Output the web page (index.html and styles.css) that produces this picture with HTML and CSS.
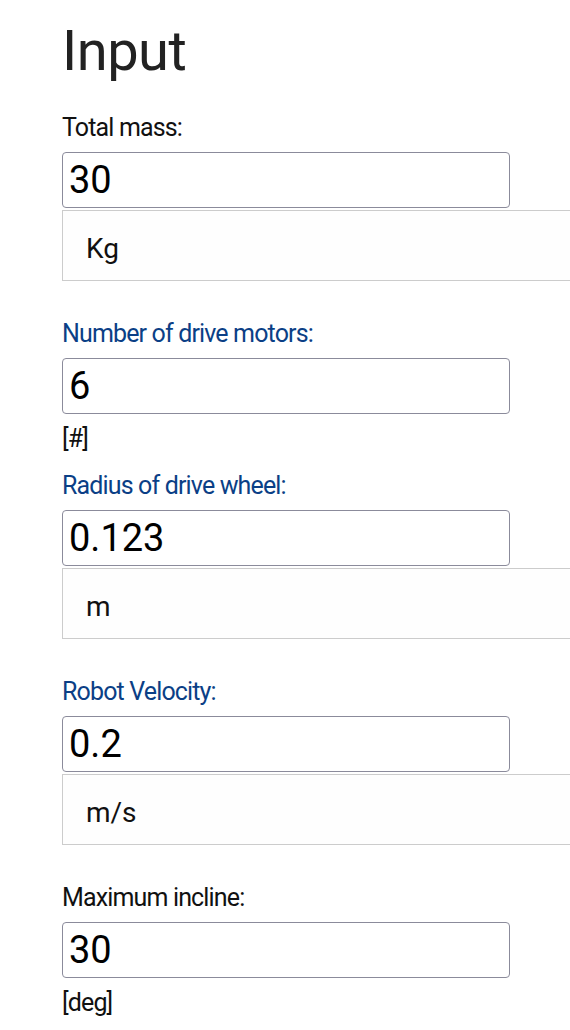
FILE: index.html
```html
<!DOCTYPE html>
<html lang="en">
<head>
<meta charset="utf-8">
<title>Input</title>
<link rel="stylesheet" href="styles.css">
</head>
<body>
<main class="page">
  <h1 class="title">Input</h1>

  <div class="field field-boxed">
    <label class="label">Total mass:</label>
    <input class="value" type="text" value="30">
    <div class="unit-box">Kg</div>
  </div>

  <div class="field field-plain">
    <label class="label label-blue">Number of drive motors:</label>
    <input class="value" type="text" value="6">
    <div class="unit-plain">[#]</div>
  </div>

  <div class="field field-boxed">
    <label class="label label-blue">Radius of drive wheel:</label>
    <input class="value" type="text" value="0.123">
    <div class="unit-box">m</div>
  </div>

  <div class="field field-boxed">
    <label class="label label-blue">Robot Velocity:</label>
    <input class="value" type="text" value="0.2">
    <div class="unit-box">m/s</div>
  </div>

  <div class="field field-plain">
    <label class="label">Maximum incline:</label>
    <input class="value" type="text" value="30">
    <div class="unit-plain">[deg]</div>
  </div>
</main>
</body>
</html>
```

FILE: styles.css
```css
html {
  overflow: hidden;
}

body {
  margin: 0;
  background: #ffffff;
  font-family: Roboto, "Liberation Sans", sans-serif;
  color: #111111;
}

.page {
  padding: 23px 0 0 62px;
}

.title {
  margin: 0 0 34px 0;
  font-size: 56px;
  line-height: 56px;
  font-weight: 400;
  color: #222222;
  letter-spacing: -0.5px;
}

.field {
  display: flex;
  flex-direction: column;
  align-items: stretch;
}

.field-boxed {
  margin-bottom: 38px;
}

.field-plain {
  margin-bottom: 17px;
}

.label {
  display: block;
  font-size: 25px;
  line-height: 30px;
  letter-spacing: -0.85px;
  color: #111111;
  margin-bottom: 9px;
}

.label-blue {
  color: #0b3f86;
}

.value {
  box-sizing: border-box;
  width: 448px;
  height: 56px;
  margin: 0;
  padding: 0 6px;
  border: 1px solid #8b8b9b;
  border-radius: 4px;
  background: #ffffff;
  font-family: Roboto, "Liberation Sans", sans-serif;
  font-size: 38px;
  color: #000000;
  outline: none;
}

.unit-box {
  box-sizing: border-box;
  height: 71px;
  margin-top: 2px;
  padding: 6px 0 0 23px;
  border: 1px solid #cccccc;
  border-right: none;
  background: #fefefe;
  display: flex;
  align-items: center;
  font-size: 28px;
  color: #111111;
}

.unit-plain {
  margin-top: 10px;
  font-size: 25px;
  line-height: 30px;
  letter-spacing: -0.85px;
  color: #111111;
}
```
